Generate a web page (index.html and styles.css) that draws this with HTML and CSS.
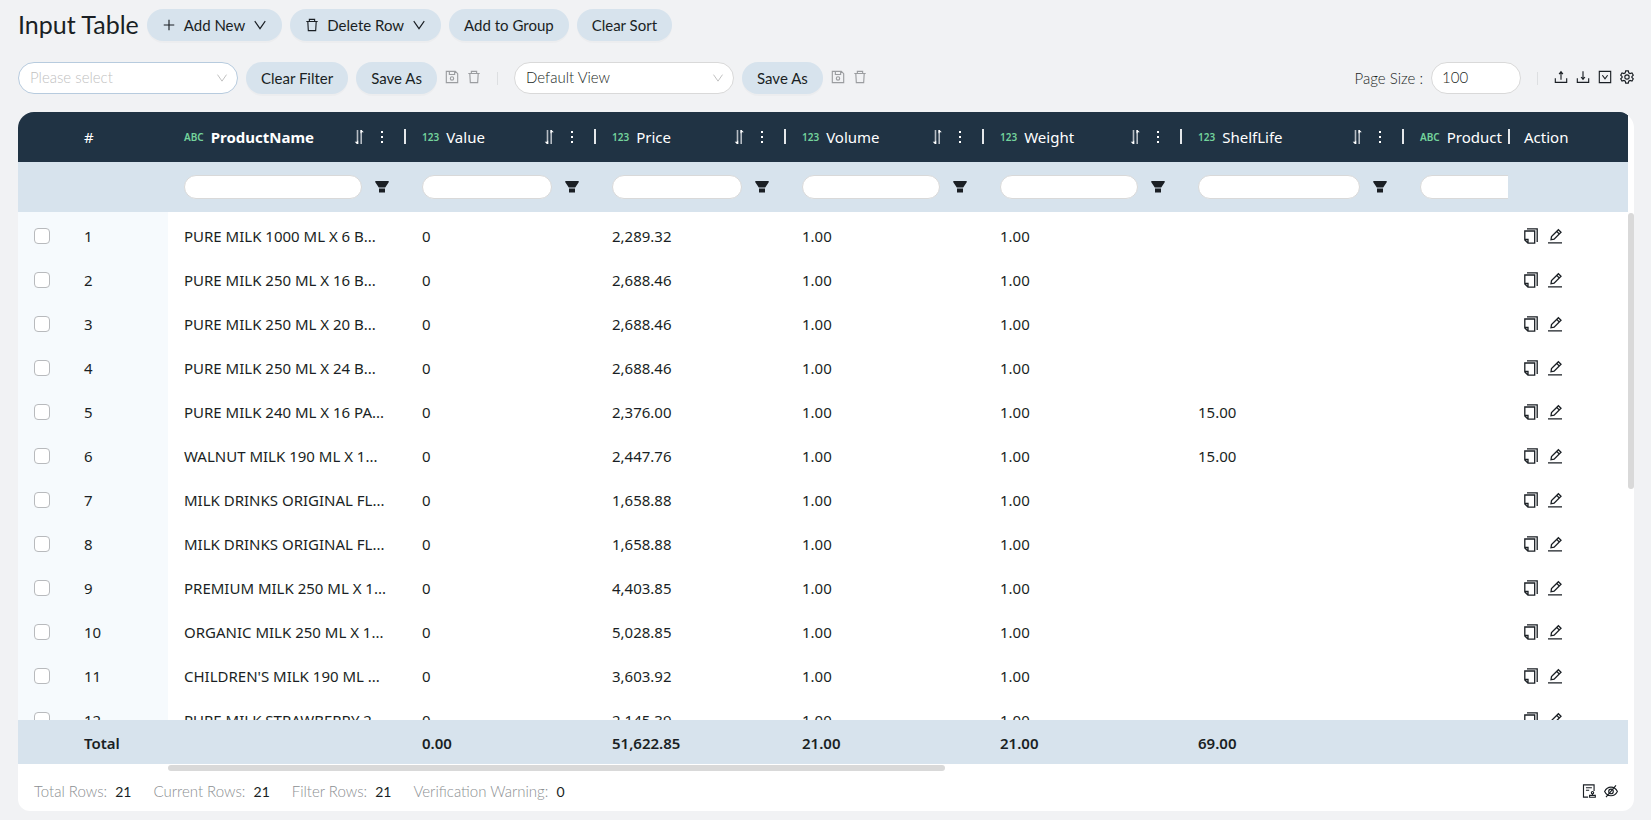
FILE: index.html
```
<!DOCTYPE html>
<html lang="en">
<head>
  <meta charset="UTF-8" />
  <meta name="viewport" content="width=device-width, initial-scale=1.0" />
  <title>Input Table</title>
  <link rel="stylesheet" href="styles.css">
</head>
<body>
  <!-- Icon set -->
  <svg class="icon-defs" aria-hidden="true">
    <symbol id="i-plus" viewBox="0 0 16 16"><path d="M8 2v12M2 8h12" /></symbol>
    <symbol id="i-down" viewBox="0 0 16 16"><path d="M2 3.500L8 12.200l6-8.700" /></symbol>
    <symbol id="i-trash" viewBox="0 0 16 16"><path d="M1.500 4h13M5 4V1.600h6V4M3.200 4l.6 10.500h8.400L12.800 4" /></symbol>
    <symbol id="i-save" viewBox="0 0 16 16"><path d="M1.500 1.500h10.300l2.700 2.700v10.300h-13zM5 1.500v3.700h6V1.500" /><circle cx="8" cy="9.600" r="1.900" /></symbol>
    <symbol id="i-upload" viewBox="0 0 16 16"><path d="M1.500 9.500v4.700h13V9.500M8 11V2.200M5.800 4.600L8 2l2.200 2.600" /></symbol>
    <symbol id="i-download" viewBox="0 0 16 16"><path d="M1.500 9.500v4.700h13V9.500M8 1.500v8.800M5.800 8L8 10.600 10.200 8" /></symbol>
    <symbol id="i-boxdown" viewBox="0 0 16 16"><path d="M1.500 1.500h13v13h-13zM5 6l3 4 3-4" /></symbol>
    <symbol id="i-gear" viewBox="0 0 16 16"><path d="M6.500 1h3l.5 2.200 1.500.9 2.200-.7 1.500 2.600L13.600 7.500v1L15.200 10l-1.500 2.600-2.200-.7-1.500.9L9.500 15h-3L6 12.800l-1.500-.9-2.200.7L.8 10l1.600-1.500v-1L.8 6l1.500-2.600 2.200.7L6 3.200z" /><circle cx="8" cy="8" r="2.500" /></symbol>
    <symbol id="i-sort" viewBox="0 0 16 16"><path class="bar" d="M6.500 1v14M10.200 15V1" /><path class="solid" d="M7.200 15H6L3.700 12.800h2.500v-1h1zM9.500 1h1l2.300 2.200h-2.300v1h-1z" /></symbol>
    <symbol id="i-dots" viewBox="0 0 16 16"><path class="solid" d="M7 2h2v2H7zM7 7h2v2H7zM7 12h2v2H7z" /></symbol>
    <symbol id="i-filter" viewBox="0 0 16 16"><path class="solid" d="M1.300 2h13.400v1.300L11.200 8.500H4.800L1.300 3.300zM5 9.600h6v3.900H5z" /></symbol>
    <symbol id="i-copy" viewBox="1 0 16 16"><path d="M4 .8h10.200v13.200M1.800 3h9.900v12.200H5L1.800 12zM1.800 11.500H5v3.500" /></symbol>
    <symbol id="i-edit" viewBox="1 0 16 16"><path d="M1 14.800h14M4 11.800l.5-3.200 6.900-6.900 2.600 2.600-6.900 6.900zM9.700 3.400l2.600 2.600" /></symbol>
    <symbol id="i-audit" viewBox="0 0 16 16"><path d="M7 15H1.700V1h12.100v7M4.500 4.300h6.800M4.500 7.200h3.700M8.700 15.200h6.500v-2.200H8.700zM12 13v-1.800" /><circle cx="12" cy="9.900" r="1.300" /></symbol>
    <symbol id="i-eyeoff" viewBox="0 0 16 16"><path d="M.7 8.500C2.500 5 5 3.600 8 3.600s5.500 1.400 7.300 4.900C13.500 12 11 13.400 8 13.400S2.500 12 .7 8.500zM2.300 15L13.700 1.500" /><circle cx="8" cy="8.500" r="2.600" /></symbol>
  </svg>

  <header class="toolbar">
    <h1>Input Table</h1>
    <button class="btn" type="button"><svg class="icon"><use href="#i-plus" /></svg>Add New<svg class="icon"><use href="#i-down" /></svg></button>
    <button class="btn" type="button"><svg class="icon"><use href="#i-trash" /></svg>Delete Row<svg class="icon"><use href="#i-down" /></svg></button>
    <button class="btn" type="button">Add to Group</button>
    <button class="btn" type="button">Clear Sort</button>
  </header>

  <section class="toolbar filters">
    <div class="select-wrap active">
      <select class="placeholder" aria-label="Saved filter"><option>Please select</option></select>
      <svg class="icon"><use href="#i-down" /></svg>
    </div>
    <button class="btn" type="button">Clear Filter</button>
    <button class="btn" type="button">Save As</button>
    <button class="icon-btn muted" type="button" aria-label="Save filter"><svg class="icon"><use href="#i-save" /></svg></button>
    <button class="icon-btn muted" type="button" aria-label="Delete filter"><svg class="icon"><use href="#i-trash" /></svg></button>
    <span class="divider"></span>
    <div class="select-wrap">
      <select aria-label="View"><option>Default View</option></select>
      <svg class="icon"><use href="#i-down" /></svg>
    </div>
    <button class="btn" type="button">Save As</button>
    <button class="icon-btn muted" type="button" aria-label="Save view"><svg class="icon"><use href="#i-save" /></svg></button>
    <button class="icon-btn muted" type="button" aria-label="Delete view"><svg class="icon"><use href="#i-trash" /></svg></button>

    <label class="page-label" for="page-size">Page Size :</label>
    <input class="page-size" id="page-size" type="text" value="100" />
    <span class="divider"></span>
    <button class="icon-btn" type="button" aria-label="Import"><svg class="icon"><use href="#i-upload" /></svg></button>
    <button class="icon-btn" type="button" aria-label="Export"><svg class="icon"><use href="#i-download" /></svg></button>
    <button class="icon-btn" type="button" aria-label="Expand"><svg class="icon"><use href="#i-boxdown" /></svg></button>
    <button class="icon-btn" type="button" aria-label="Settings"><svg class="icon"><use href="#i-gear" /></svg></button>
  </section>

  <main class="card">
    <div class="table-area">
      <div class="table-view">
        <table>
          <colgroup>
            <col class="c-check"><col class="c-num"><col class="c-name"><col class="c-value"><col class="c-value">
            <col class="c-volume"><col class="c-volume"><col class="c-shelf"><col><col class="c-action">
          </colgroup>
          <thead>
            <tr class="titles" id="titles"></tr>
            <tr class="search" id="search"></tr>
          </thead>
          <tbody id="rows"></tbody>
          <tfoot>
            <tr>
              <td></td><td>Total</td><td></td><td>0.00</td><td>51,622.85</td>
              <td>21.00</td><td>21.00</td><td>69.00</td><td></td><td class="action"></td>
            </tr>
          </tfoot>
        </table>
      </div>
      <div class="v-scroll"><div class="thumb"></div></div>
    </div>
    <div class="h-scroll"><div class="thumb"></div></div>
    <footer class="status">
      <span class="stat">Total Rows: <b>21</b></span>
      <span class="stat">Current Rows: <b>21</b></span>
      <span class="stat">Filter Rows: <b>21</b></span>
      <span class="stat">Verification Warning: <b>0</b></span>
      <div class="status-tools">
        <button class="icon-btn" type="button" aria-label="Audit"><svg class="icon"><use href="#i-audit" /></svg></button>
        <button class="icon-btn" type="button" aria-label="Hide"><svg class="icon"><use href="#i-eyeoff" /></svg></button>
      </div>
    </footer>
  </main>

  <script>
    const columns = [
      ["ABC", "ProductName"],
      ["123", "Value"],
      ["123", "Price"],
      ["123", "Volume"],
      ["123", "Weight"],
      ["123", "ShelfLife"],
      ["ABC", "Product"]
    ];

    // name, price, shelf life
    const products = [
      ["PURE MILK 1000 ML X 6 B...", "2,289.32", ""],
      ["PURE MILK 250 ML X 16 B...", "2,688.46", ""],
      ["PURE MILK 250 ML X 20 B...", "2,688.46", ""],
      ["PURE MILK 250 ML X 24 B...", "2,688.46", ""],
      ["PURE MILK 240 ML X 16 PA...", "2,376.00", "15.00"],
      ["WALNUT MILK 190 ML X 1...", "2,447.76", "15.00"],
      ["MILK DRINKS ORIGINAL FL...", "1,658.88", ""],
      ["MILK DRINKS ORIGINAL FL...", "1,658.88", ""],
      ["PREMIUM MILK 250 ML X 1...", "4,403.85", ""],
      ["ORGANIC MILK 250 ML X 1...", "5,028.85", ""],
      ["CHILDREN'S MILK 190 ML ...", "3,603.92", ""],
      ["PURE MILK STRAWBERRY 2...", "2,145.39", ""]
    ];

    const icon = (name) => `<svg class="icon"><use href="#i-${name}" /></svg>`;
    const iconBtn = (name, label) =>
      `<button class="icon-btn" type="button" aria-label="${label}">${icon(name)}</button>`;

    document.getElementById("titles").innerHTML =
      `<th></th><th>#</th>` +
      columns.map(([type, title], i) => `
        <th class="sortable${i === 0 ? " key" : ""}"><div class="cell">
          <span class="type">${type}</span><span class="title">${title}</span>
          ${iconBtn("sort", "Sort " + title)}${iconBtn("dots", title + " menu")}
        </div></th>`).join("") +
      `<th class="action">Action</th>`;

    document.getElementById("search").innerHTML =
      `<td></td><td></td>` +
      columns.map(([, title]) => `
        <td><div class="cell">
          <input type="text" aria-label="Filter ${title}" />${iconBtn("filter", "Filter " + title)}
        </div></td>`).join("") +
      `<td class="action"></td>`;

    document.getElementById("rows").innerHTML = products.map(([name, price, shelf], i) => `
      <tr>
        <td class="pinned"><input type="checkbox" aria-label="Select row ${i + 1}" /></td>
        <td class="pinned">${i + 1}</td>
        <td>${name}</td><td>0</td><td>${price}</td><td>1.00</td><td>1.00</td><td>${shelf}</td><td></td>
        <td class="action"><div class="cell">${iconBtn("copy", "Copy")}${iconBtn("edit", "Edit")}</div></td>
      </tr>`).join("");
  </script>
</body>
</html>
```
FILE: styles.css
```
* {
  margin: 0;
  padding: 0;
  box-sizing: border-box;
}

body {
  display: flex;
  flex-direction: column;
  height: 100vh;
  padding: 9px 17px 9px 18px;
  font-family: Lato, sans-serif;
  font-size: 15px;
  color: #1a1f24;
  background-color: #f1f2f4;
  overflow: hidden;
}

button,
input,
select {
  font: inherit;
  color: inherit;
}

button {
  border: 0;
  background: none;
  cursor: pointer;
}

/* Icons */
.icon-defs {
  position: absolute;
  width: 0;
  height: 0;
}

.icon {
  display: block;
  flex: none;
  width: 14px;
  height: 14px;
  fill: none;
  stroke: currentColor;
  stroke-width: 1.3;
}

.icon-btn {
  flex: none;
  color: #1a1f24;
}

.icon-btn.muted {
  color: #9b9da0;
}

/* Toolbars */
.toolbar {
  display: flex;
  align-items: center;
  gap: 8px;
  height: 32px;
  flex: none;
}

.toolbar .icon-btn {
  padding-bottom: 2px;
}

h1 {
  font-size: 25px;
  font-weight: 400;
  line-height: 30px;
  padding-bottom: 2px;
}

.filters {
  margin: 21px 0 18px;
}

.btn {
  display: flex;
  align-items: center;
  gap: 8px;
  height: 32px;
  padding: 0 15px 1px;
  border-radius: 16px;
  background-color: #d7e3ed;
  box-shadow: 0 2px 0 rgba(0, 0, 0, 0.02);
  white-space: nowrap;
}

.select-wrap {
  position: relative;
  width: 220px;
}

.select-wrap select {
  display: block;
  width: 100%;
  height: 32px;
  padding: 0 32px 2px 11px;
  border: 1px solid #d9d9d9;
  border-radius: 16px;
  background-color: #fff;
  font-weight: 300;
  appearance: none;
}

.select-wrap.active select {
  border-color: #b7cbde;
}

.select-wrap select.placeholder {
  color: #bfbfbf;
}

.select-wrap .icon {
  position: absolute;
  top: 9px;
  right: 10px;
  width: 12px;
  color: #bfbfbf;
  pointer-events: none;
}

.divider {
  width: 1px;
  height: 13px;
  margin: 0 8px;
  background-color: #dddfe1;
}

.page-label {
  margin-left: auto;
  padding-bottom: 1px;
  font-weight: 300;
}

.page-size {
  width: 90px;
  height: 32px;
  padding: 0 10px 2px;
  border: 1px solid #d9d9d9;
  border-radius: 16px;
  background-color: #fff;
  font-weight: 300;
}

/* Card */
.card {
  display: flex;
  flex-direction: column;
  flex: 1;
  min-height: 0;
  border-radius: 16px 16px 12px 12px;
  background-color: #fff;
  overflow: hidden;
}

.table-area {
  display: flex;
  flex: 1;
  min-height: 0;
}

.table-view {
  flex: 1;
  min-width: 0;
  overflow: hidden;
}

/* Table */
table {
  width: 108%;
  min-width: 1520px;
  table-layout: fixed;
  border-collapse: separate;
  border-spacing: 0;
  font-family: "Noto Sans", sans-serif;
}

.c-check { width: 50px; }
.c-num { width: 100px; }
.c-name { width: 238px; }
.c-value { width: 190px; }
.c-volume { width: 198px; }
.c-shelf { width: 222px; }
.c-action { width: 120px; }

th,
td {
  height: 44px;
  padding: 0 16px;
  text-align: left;
  font-weight: 400;
  line-height: 20px;
  white-space: nowrap;
}

tbody td {
  padding-top: 3px;
}

thead {
  position: sticky;
  top: 0;
  z-index: 2;
}

tfoot {
  position: sticky;
  bottom: 0;
  z-index: 2;
}

.titles th {
  position: relative;
  height: 50px;
  color: #fff;
  background-color: #203344;
}

.titles .key {
  font-weight: 700;
}

/* Column resize handle */
.titles .sortable::after,
.titles .action::before {
  content: "";
  position: absolute;
  top: 17px;
  right: 0;
  width: 2px;
  height: 15px;
  background-color: #e4e7ea;
}

.titles .action::before {
  left: 0;
}

.search td {
  height: 50px;
  background-color: #d7e3ed;
}

.search input {
  flex: 1;
  min-width: 0;
  height: 24px;
  padding: 0 12px;
  border: 1px solid #d9d9d9;
  border-radius: 12px;
  background-color: #fff;
}

.cell {
  display: flex;
  align-items: center;
  gap: 8px;
}

.search .cell {
  gap: 12px;
}

.cell .icon {
  width: 16px;
  height: 16px;
}

.type {
  font-size: 10px;
  font-weight: 600;
  color: #74d39c;
}

.title {
  flex: 1;
}

.titles .cell {
  gap: 7px;
}

.titles .icon {
  color: #fff;
}

.bar {
  stroke: #b5bcc3;
  stroke-width: 1.6;
}

.solid {
  fill: currentColor;
  stroke: none;
}

/* Pinned columns */
.titles .action,
td.action {
  position: sticky;
  right: 0;
  z-index: 1;
}

td.action {
  background-color: #fff;
}

.search td.action {
  background-color: #d7e3ed;
}

.pinned {
  background-color: #f6fafd;
}

tbody input {
  display: block;
  width: 16px;
  height: 16px;
  border: 1px solid #b8babd;
  border-radius: 4px;
  background-color: #fff;
  appearance: none;
}

tfoot td,
tfoot td.action {
  padding-top: 2px;
  font-weight: 600;
  background-color: #d7e3ed;
}

/* Scrollbars */
.thumb {
  border-radius: 3px;
  background-color: #d9d9d9;
}

.v-scroll {
  width: 6px;
  padding-top: 101px;
}

.v-scroll .thumb {
  height: 50%;
}

.h-scroll {
  padding: 1px 126px 0 150px;
}

.h-scroll .thumb {
  width: 58%;
  height: 6px;
}

/* Status bar */
.status {
  display: flex;
  align-items: center;
  gap: 22px;
  height: 40px;
  padding: 0 16px 1px;
  font-weight: 300;
}

.stat {
  color: #8c8f92;
}

.stat b {
  margin-left: 4px;
  font-size: 14px;
  font-weight: 400;
  color: #1a1f24;
}

.status-tools {
  display: flex;
  gap: 8px;
  margin-left: auto;
}
```
